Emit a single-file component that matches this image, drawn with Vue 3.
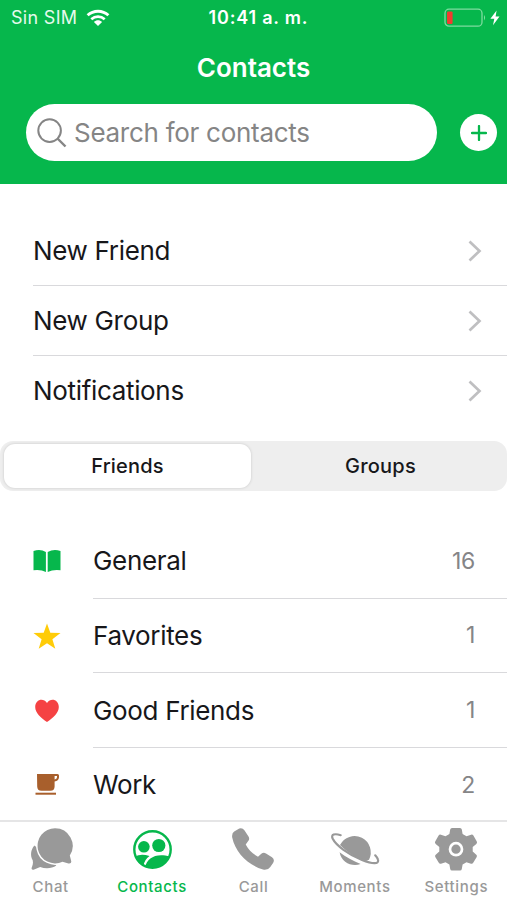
<script setup>
import { ref } from 'vue'

const actions = ['New Friend', 'New Group', 'Notifications']
const segments = ['Friends', 'Groups']
const activeSegment = ref('Friends')
const groups = [
  { name: 'General', count: 16, icon: 'book' },
  { name: 'Favorites', count: 1, icon: 'star' },
  { name: 'Good Friends', count: 1, icon: 'heart' },
  { name: 'Work', count: 2, icon: 'cup' },
]
const tabs = ['Chat', 'Contacts', 'Call', 'Moments', 'Settings']
const activeTab = ref('Contacts')
</script>

<template>
  <div class="screen">
    <header class="header">
      <div class="status">
        <div class="carrier">
          <span>Sin SIM</span>
          <svg class="wifi" viewBox="0 0 24 18" fill="none" stroke="#fff">
            <path d="M1.6 6.3C7.5.8 16.5.8 22.4 6.3" stroke-width="2.9" />
            <path d="M5.3 10.3C9.2 6.8 14.8 6.8 18.7 10.3" stroke-width="2.7" />
            <path d="M12 17 7.9 12.9C10.3 10.8 13.7 10.8 16.1 12.9Z" fill="#fff" stroke="none" />
          </svg>
        </div>
        <span class="clock">10:41 a. m.</span>
        <div class="power">
          <svg class="battery" viewBox="0 0 43 20">
            <rect x="1" y="1.2" width="37" height="17" rx="4" fill="none" stroke="#7fdc9f" stroke-width="1.3" />
            <rect x="3" y="3.4" width="5.6" height="12.6" rx="1.2" fill="#f23b30" />
            <path d="M40 7Q42.2 9.7 40 12.4Z" fill="#7fdc9f" />
          </svg>
          <svg class="bolt" viewBox="0 0 10 16"><path d="M6.6.5.4 8.8H4.3L3 15.2 9.5 6.6H5.6Z" fill="#fff" /></svg>
        </div>
      </div>
      <h1 class="title">Contacts</h1>
      <div class="search-row">
        <div class="search">
          <svg class="lens" viewBox="0 0 30 30" fill="none" stroke="#858585" stroke-width="2">
            <circle cx="12.6" cy="12.6" r="11.3" /><path d="m20.5 20.5 8 8" stroke-width="2.4" />
          </svg>
          <span class="placeholder">Search for contacts</span>
        </div>
        <button class="add" aria-label="Add">
          <svg viewBox="0 0 16 16" stroke="#06b74c" stroke-width="2.3" stroke-linecap="round"><path d="M8 1V15M1 8H15" /></svg>
        </button>
      </div>
    </header>

    <nav class="actions">
      <div v-for="action in actions" :key="action" class="action">
        <span>{{ action }}</span>
        <svg class="chevron" viewBox="0 0 14 22" fill="none" stroke="#bfbfc1" stroke-width="2.7"><path d="m1.5 1.5 10 9.5-10 9.5" /></svg>
      </div>
    </nav>

    <div class="segments">
      <button v-for="item in segments" :key="item" class="segment" :class="{ active: item === activeSegment }" @click="activeSegment = item">{{ item }}</button>
    </div>

    <main class="groups">
      <div v-for="group in groups" :key="group.name" class="group">
        <svg class="group-icon" viewBox="0 0 28 28">
          <g v-if="group.icon === 'book'" fill="#06b74c">
            <path d="M.5 4Q7.5 1.8 12.9 5V25Q8 22.4.5 23.3Z" />
            <path d="M27.5 4Q20.5 1.8 14.7 5V25Q20 22.4 27.5 23.3Z" />
          </g>
          <path v-else-if="group.icon === 'star'" fill="#ffcc08" d="m14 1.5 3.3 9.2 10.2.3-8.1 6.2 2.9 9.6L14 21.2l-8.3 5.6 2.9-9.6L.5 11l10.2-.3Z" />
          <path v-else-if="group.icon === 'heart'" fill="#f54243" d="M14 25C8 21.2 2.2 16.1 2.2 10.1 2.2 2.6 10.2.3 14 6 17.8.3 25.8 2.6 25.8 10.1 25.8 16.1 20 21.2 14 25Z" />
          <g v-else fill="#a85f2c">
            <path fill-rule="evenodd" d="M4 2.9H24.5Q26 2.9 26 4.4V6.5Q25.6 9.9 21.6 10.5V15.5Q21.6 19.7 17.4 19.7H8.5Q4.2 19.7 4.2 15.5ZM21.6 5V8.5Q24 8.3 24 6.3V5Z" />
            <rect x="2.5" y="21.7" width="20.5" height="2" />
          </g>
        </svg>
        <div class="group-body">
          <span>{{ group.name }}</span>
          <span class="count">{{ group.count }}</span>
        </div>
      </div>
    </main>

    <footer class="tabs">
      <button v-for="tab in tabs" :key="tab" class="tab" :class="{ active: tab === activeTab }" @click="activeTab = tab">
        <svg v-if="tab === 'Chat'" class="tab-icon" viewBox="0 0 44 44">
          <path fill="currentColor" d="M5.5 18.5C1.6 22.5 1.1 29 3.7 33.3 4.5 36.5 3.4 38.8 2.6 41 2.4 42.7 3.5 43 5.2 42.4L11.2 39.9C16.5 42 23 41.5 27.3 38.5Z" />
          <path fill="currentColor" stroke="#fff" stroke-width="2.8" paint-order="stroke" d="M26 1.2A17.6 17.6 0 1 0 33.5 34.8L39.5 36.4Q42.8 36.8 42.2 34L40.8 28.4A17.6 17.6 0 0 0 26 1.2Z" />
        </svg>
        <svg v-else-if="tab === 'Contacts'" class="tab-icon" viewBox="0 0 44 44">
          <circle cx="22.5" cy="22.5" r="18.2" fill="none" stroke="currentColor" stroke-width="2.4" />
          <circle cx="13.9" cy="19.8" r="5.8" fill="currentColor" />
          <circle cx="28.8" cy="18.5" r="6.6" fill="currentColor" />
          <path fill="currentColor" d="M5 29.5Q11 26.2 19.5 29 14.5 32.4 13.4 39 7.5 36 5 29.5ZM15.2 40C17 31 26 25.5 39.9 29.5Q33 44 15.2 40Z" />
        </svg>
        <svg v-else-if="tab === 'Call'" class="tab-icon" viewBox="0 0 44 44">
          <path fill="currentColor" d="M3.2 4.5 8.3 1.5Q11.4.5 13.4 3.2L17.5 9.5Q19 12 17.2 14L14.7 17.5C17.5 23 21.5 26.8 27 29.7L30.3 26.8Q32.5 25 35 26.4L41 30.3Q44 32.8 42.2 35.8L39.3 40Q37 43.5 32 42.6C16.5 37.8 4.5 25.5 1.2 10.5Q.6 6.2 3.2 4.5Z" />
        </svg>
        <svg v-else-if="tab === 'Moments'" class="tab-icon wide" viewBox="0 0 50 44">
          <path fill="currentColor" d="M10 18A16 16 0 1 1 39 32.7L36 34C26 31 17 25 10 18ZM9.6 25.2C16 30.2 23 33.8 30.6 37 22 40.2 11.5 35.5 9.6 25.2Z" />
          <path d="M10.7 8.2C4.5 6.2 .8 7.5 2.6 11.5 6 18.5 18.5 27.5 32 33 42.5 37.2 49.6 37.4 48 32.6 47.6 31.3 46.8 30 45.2 28.3" fill="none" stroke="currentColor" stroke-width="2.2" stroke-linecap="round" />
        </svg>
        <svg v-else class="tab-icon" viewBox="0 0 44 44">
          <path fill="currentColor" d="M18 1H26Q27.5 1 27.8 2.5L28.6 7 32.5 9.2 37.1 7.7Q38.5 7.2 39.4 8.5L42.8 14.5Q43.5 15.8 42.3 16.9L38.7 20V24.6L42.3 27.7Q43.4 28.7 42.7 30L39.2 35.8Q38.4 37.2 37 36.7L32.5 35.2 28.6 37.5 27.8 42Q27.5 43.5 26 43.5H18Q16.5 43.5 16.2 42L15.4 37.5 11.5 35.2 7 36.7Q5.6 37.2 4.8 35.8L1.3 30Q.6 28.7 1.7 27.7L5.3 24.6V20L1.7 16.9Q.5 15.8 1.2 14.5L4.6 8.5Q5.5 7.2 6.9 7.7L11.5 9.2 15.4 7 16.2 2.5Q16.5 1 18 1Z" />
          <circle cx="22" cy="22.2" r="6" fill="none" stroke="#fff" stroke-width="2.7" />
        </svg>
        <span>{{ tab }}</span>
      </button>
    </footer>
  </div>
</template>

<style>
body { margin: 0; background: #fff; }
</style>

<style scoped>
.screen { display: flex; flex-direction: column; width: 507px; height: 900px; overflow: hidden; background: #fff; color: #17171a; font-family: Inter, sans-serif; font-size: 26px; letter-spacing: -.33px; }
.screen > * { flex-shrink: 0; }
button { margin: 0; padding: 0; border: 0; background: none; font: inherit; color: inherit; }
svg { display: block; flex: none; }
.header { box-sizing: border-box; height: 184px; background: #06b74c; color: #fff; }
.status { display: grid; grid-template-columns: 1fr auto 1fr; align-items: center; height: 35px; padding: 0 7px 0 11px; font-size: 18px; letter-spacing: .3px; }
.carrier { display: flex; align-items: center; gap: 9px; color: #e5faec; }
.wifi { width: 24px; height: 18px; }
.clock { padding-left: 6px; font-weight: 600; letter-spacing: .8px; }
.power { display: flex; justify-content: flex-end; align-items: center; gap: 3px; }
.battery { width: 43px; height: 20px; }
.bolt { width: 10px; height: 16px; }
.title { margin: 0; height: 64px; line-height: 65px; text-align: center; font-size: 26px; font-weight: 600; letter-spacing: 0; }
.search-row { display: flex; align-items: center; gap: 23px; padding: 5px 0 0 26px; }
.search { display: flex; align-items: center; gap: 7px; width: 400px; height: 57px; padding-left: 11px; border-radius: 29px; background: #fff; color: #858585; letter-spacing: -.28px; }
.lens { width: 30px; height: 30px; }
.add { display: flex; align-items: center; justify-content: center; width: 37px; height: 37px; border-radius: 50%; background: #fff; }
.add svg { width: 16px; height: 16px; }
.actions { padding: 32px 0 0 33px; }
.action { box-sizing: border-box; display: flex; justify-content: space-between; align-items: center; height: 70px; padding-right: 25px; border-bottom: 1px solid #d9d9dc; }
.action:last-child { border-bottom-color: transparent; }
.chevron { width: 14px; height: 22px; }
.segments { display: flex; box-sizing: border-box; height: 50px; margin-top: 15px; padding: 3px 0 3px 4px; border-radius: 13px; background: #eee; }
.segment { flex: 1; padding-left: 3px; border-radius: 11px; font-size: 20px; font-weight: 500; letter-spacing: .2px; }
.segment.active { flex: none; width: 247px; padding-left: 0; background: #fff; box-shadow: 0 0 3px rgba(0, 0, 0, .16); }
.groups { box-sizing: border-box; padding: 33px 0 0 33px; height: 329px; }
.group { display: flex; align-items: center; height: 74.67px; gap: 32px; }
.group-icon { width: 28px; height: 28px; }
.group-body { box-sizing: border-box; flex: 1; display: flex; align-items: center; justify-content: space-between; height: 100%; padding-right: 32px; border-bottom: 1px solid #d9d9dc; }
.group:last-child .group-body { border-bottom-color: transparent; }
.count { font-size: 23px; color: #858587; }
.tabs { position: relative; display: grid; grid-template-columns: repeat(5, 1fr); box-sizing: border-box; height: 80px; border-top: 2px solid #e5e5e6; background: #fff; }
.tab { display: flex; flex-direction: column; align-items: center; padding-top: 5px; color: #999; font-size: 15px; font-weight: 500; line-height: 20px; letter-spacing: .65px; }
.tab span { padding-top: 6px; }
.tab.active { color: #06b74c; }
.tab-icon { width: 44px; height: 44px; }
.tab-icon.wide { width: 50px; }
</style>
